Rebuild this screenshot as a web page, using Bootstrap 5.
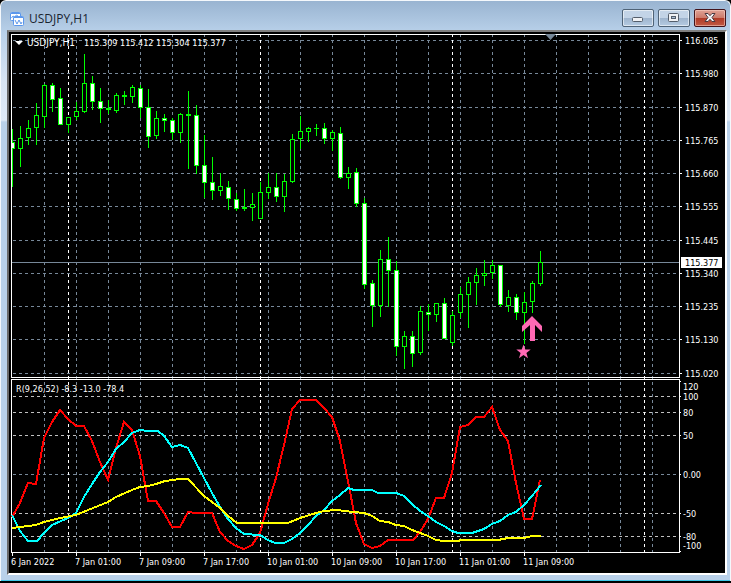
<!DOCTYPE html>
<html lang="en">
<head>
<meta charset="utf-8">
<meta name="viewport" content="width=device-width, initial-scale=1">
<title>USDJPY,H1</title>
<link href="https://cdn.jsdelivr.net/npm/bootstrap@5.3.0/dist/css/bootstrap.min.css" rel="stylesheet">
<style>
body { background: #000; }
.win {
  background: linear-gradient(#99b4d1, #b9d1ea 32px, #d7e4f3 80px, #dfeaf7 119px, #b9d1ea 121px);
  border: solid #f4f8fc;
  border-width: 1px 1px 0 1px;
  border-radius: 6px 6px 0 0;
  padding: 0 3px 6px 6px;
  box-shadow: inset 0 -1px #3fc8e8;
  margin-bottom: 1px;
}
.titlebar { height: 29px; padding: 0 1px 0 3px; }
.titlebar h1 { font: 12px/16px "Open Sans", "Noto Sans", sans-serif; color: #1a2430; padding-top: 6px; }
.app-icon { width: 14px; height: 14px; margin: 6px 5px 0 0; }
.ctl {
  width: 32px; height: 18px; border: 1px solid #4f6377; border-radius: 2px;
  background: linear-gradient(#c3d4e7 0 48%, #9fb5ce 52%, #b5cbe2);
  box-shadow: inset 0 0 0 1px rgba(255,255,255,.55);
}
.ctl-close {
  border-color: #43141b;
  background: linear-gradient(#dc9a8d 0 10%, #cc7a6b 48%, #b03a27 52%, #c25a44);
  box-shadow: inset 0 0 0 1px rgba(255,220,210,.5);
}
.chartbox { background: #000; border: 2px solid #696969; border-color: #808080 #fff #fff #696969; }
.chartbox svg { width: 100%; height: auto; }
.chart text { font: 9px "DejaVu Sans Condensed", "DejaVu Sans", sans-serif; font-stretch: condensed; fill: #fff; white-space: pre; }
.chart .symbol { font-size: 10px; }
.chart .now-label { fill: #000; }
.crisp { shape-rendering: crispEdges; }
</style>
<script src="https://cdn.jsdelivr.net/npm/bootstrap@5.3.0/dist/js/bootstrap.bundle.min.js"></script>
</head>
<body>
<main class="win d-flex flex-column">
  <header class="titlebar d-flex align-items-center">
    <svg class="app-icon flex-shrink-0" viewBox="0 0 14 14" aria-hidden="true">
      <rect x=".5" y=".5" width="10" height="8" rx="1" fill="#fff" stroke="#5b97ec"/>
      <path d="M1 1.500h9" stroke="#5b97ec"/>
      <path d="M1.500 6l1.500-2 1.500 1L6.500 3 9 5" stroke="#5b97ec" fill="none"/>
      <rect x="3.500" y="4.500" width="10" height="9" rx="1" fill="#fff" stroke="#5b97ec"/>
      <path d="M4 5.500h9" stroke="#5b97ec"/>
      <path d="M5 8l2 4 2-4 2 4 1-2" stroke="#5b97ec" fill="none"/>
    </svg>
    <h1 class="mb-0 flex-grow-1">USDJPY,H1</h1>
    <div class="d-flex gap-1 pt-1 controls">
      <button class="ctl p-0 d-flex align-items-center justify-content-center" type="button" aria-label="Minimize">
        <svg width="12" height="10" viewBox="0 0 12 10"><rect x=".5" y="4.500" width="10" height="4" rx="1" fill="#f0f2f5" stroke="#545e6b"/></svg>
      </button>
      <button class="ctl p-0 d-flex align-items-center justify-content-center" type="button" aria-label="Maximize">
        <svg width="12" height="10" viewBox="0 0 12 10"><rect x=".5" y=".5" width="10" height="8" rx="1" fill="#f0f2f5" stroke="#545e6b"/><rect x="3.500" y="3.500" width="4" height="2" fill="#a9bed5" stroke="#545e6b"/></svg>
      </button>
      <button class="ctl ctl-close p-0 d-flex align-items-center justify-content-center" type="button" aria-label="Close">
        <svg width="12" height="10" viewBox="0 0 12 10"><path d="M1 .5h3l2 2.200L8 .5h3L8 4.500l3 4H8L6 6.300 4 8.500H1l3-4z" fill="#f0f2f5" stroke="#4c3a42"/></svg>
      </button>
    </div>
  </header>
  <section class="chartbox">
    <svg class="chart d-block" viewBox="9 32 716 541" role="img" aria-label="USDJPY hourly chart">
      <g id="grid" class="crisp" fill="none"></g>
      <g class="crisp" fill="none" stroke="#fff">
        <path d="M11.500 34.500H679.500V377.500H11.500z"/>
        <path d="M11.500 379.500H679.500V552.500H11.500z"/>
        <path id="ticks"/>
      </g>
      <path d="M545 34h11l-5.500 6z" fill="#778899"/>
      <g id="candles" class="crisp" stroke="#0f0"></g>
      <g class="crisp" fill="none" stroke-width="2">
        <polyline id="fast" stroke="#f00"/>
        <polyline id="mid" stroke="#0ff"/>
        <polyline id="slow" stroke="#ff0"/>
      </g>
      <path d="M532 316l10 10v6l-7-7V341h-5V325l-8 7v-6z" fill="#ff69b4"/>
      <path d="M523.500 344.500l1.800 5h5.400l-4.300 3.400 1.600 5.400-4.500-3.200-4.500 3.200 1.600-5.400-4.300-3.400h5.400z" fill="#ff69b4"/>
      <path d="M15 41h8l-4 4z" fill="#fff"/>
      <text class="symbol" x="27" y="46">USDJPY,H1</text>
      <text x="84" y="46">115.309 115.412 115.304 115.377</text>
      <text x="16" y="392">R(9,26,52) -8.3 -13.0 -78.4</text>
      <g id="labels"></g>
      <rect class="crisp" x="681" y="257" width="41" height="11" fill="#fff"/>
      <text class="now-label" x="685" y="266">115.377</text>
    </svg>
  </section>
</main>
<script>
const el = id => document.getElementById(id);
const prices = [[40,'116.085'],[73,'115.980'],[107,'115.870'],[140,'115.765'],[173,'115.660'],[206,'115.555'],
  [240,'115.445'],[273,'115.340'],[306,'115.235'],[339,'115.130'],[373,'115.020']];
const levels = [[390,'120'],[400,'100'],[416,'80'],[439,'50'],[478,'0.00'],[517,'-50'],[540,'-80'],[549,'-100']];
const dates = ['6 Jan 2022','7 Jan 01:00','7 Jan 09:00','7 Jan 17:00','10 Jan 01:00','10 Jan 09:00','10 Jan 17:00','11 Jan 01:00','11 Jan 09:00'];

// Grid: hour lines, price lines, oscillator levels, day separators
const h = (y, c) => `<path d="M13 ${y + .5}H679" stroke="${c}" stroke-dasharray="3 3"/>`;
const v = (x, c) => `<path d="M${x + .5} 34V552" stroke="${c}" stroke-dasharray="3 3"/>`;
let grid = '';
for (let x = 44; x < 679; x += 32) grid += v(x, '#778899');
prices.forEach(([y]) => grid += h(y, '#778899'));
grid += h(474, '#778899');
[396, 412, 435, 513, 536].forEach(y => grid += h(y, '#c0c0c0'));
[68, 260, 452, 644].forEach(x => grid += v(x, '#fff'));
grid += '<path d="M12 262.500H679" stroke="#778899"/>';
el('grid').innerHTML = grid;

// Axis ticks and labels
let ticks = '', labels = '';
prices.forEach(([y, t]) => { ticks += `M680 ${y + .5}h2`; labels += `<text x="685" y="${y + 4}">${t}</text>`; });
[381, 396, 412, 435, 474, 513, 536, 551].forEach(y => ticks += `M680 ${y + .5}h1`);
levels.forEach(([y, t]) => labels += `<text x="683" y="${y}">${t}</text>`);
dates.forEach((t, i) => { const x = 12 + i * 64; ticks += `M${x + .5} 553v3`; labels += `<text x="${x - 1}" y="565">${t}</text>`; });
el('ticks').setAttribute('d', ticks);
el('labels').innerHTML = labels;

// Candles, 8 units apart: [high, body top, body bottom, low, falling]
const candles = [[129,142,149,187,1],[126,138,149,167],[120,128,138,145],[103,115,128,145],[84,85,117,128],[83,85,100,112,1],
[88,98,125,125,1],[117,117,125,133],[102,111,117,120],[54,83,112,113],[76,83,102,110,1],[88,101,109,123,1],[100,108,110,114],
[93,95,111,113],[91,95,97,105],[85,87,97,103],[85,88,108,118,1],[89,107,137,148,1],[111,118,136,139],[114,118,121,132,1],
[118,120,133,140,1],[113,114,133,143],[91,114,116,169],[105,115,166,174,1],[135,165,183,198,1],[157,182,191,200,1],
[173,186,191,196],[181,187,199,210,1],[193,199,209,211,1],[189,207,209,211],[193,204,208,221],[182,192,219,219],
[173,187,193,199],[173,187,197,202,1],[174,181,197,212],[134,139,182,183],[116,131,139,149],[127,128,132,142],
[124,128,129,136],[123,128,139,144,1],[130,132,139,151],[127,133,178,179,1],[167,173,178,189],[168,172,204,207,1],
[198,203,285,289,1],[280,283,306,327,1],[250,259,306,317],[237,259,271,307,1],[261,270,347,356,1],[331,336,347,369],
[331,336,354,367,1],[306,311,353,355],[304,312,315,331,1],[303,303,315,322],[298,303,339,339,1],[311,315,343,346],
[287,294,313,318],[277,282,295,328],[268,275,283,305],[260,273,276,286],[260,265,273,279],[265,265,305,307,1],
[290,297,306,312],[294,297,313,320,1],[292,302,313,344],[281,283,302,313],[251,262,284,286]];
el('candles').innerHTML = candles.map(([hi, t, b, lo, down], i) => {
  const x = 12 + i * 8, left = Math.max(x - 2, 12);
  const wick = `<path d="M${x + .5} ${hi}V${lo}"/>`;
  if (b - t < 3) return wick + `<rect x="${left}" y="${t}" width="${x + 3 - left}" height="${b - t}" fill="#0f0" stroke="none"/>`;
  if (i === 0) return wick + `<rect x="12" y="${t}" width="3" height="${b - t}" fill="#0f0" stroke="none"/><rect x="12" y="${t + 1}" width="2" height="${b - t - 2}" fill="#fff" stroke="none"/>`;
  return wick + `<rect x="${x - 1.5}" y="${t + .5}" width="4" height="${b - t - 1}" fill="${down ? '#fff' : '#000'}"/>`;
}).join('');

// Oscillator curves
el('fast').setAttribute('points', '12,517 20,503 28,483 36,484 44,438 52,422 60,410 68,419 76,426 84,426 92,441 100,462 108,480 116,448 124,422 132,430 140,456 148,501 156,501 164,513 172,527 180,527 188,512 196,513 212,513 220,532 228,541 236,546 244,549 252,545 260,533 268,504 276,478 284,445 292,409 300,400 316,400 324,408 332,417 340,441 348,481 356,523 364,544 372,548 380,546 388,540 413,540 420,532 428,519 436,498 444,498 452,473 460,427 468,425 476,417 484,417 492,407 500,430 508,441 516,483 524,519 532,519 540,480');
el('mid').setAttribute('points', '12,515 20,531 28,541 37,541 44,533 52,525 68,518 76,513 84,497 92,484 100,472 108,462 116,449 124,442 132,433 140,430 148,431 158,431 164,436 172,447 180,445 188,448 196,463 204,478 212,493 220,507 228,519 236,528 244,534 260,535 268,540 275,543 284,543 292,539 300,533 308,525 316,516 324,510 332,501 340,495 348,488 354,490 372,490 378,493 396,493 404,496 412,504 420,511 428,516 436,522 444,526 452,531 458,533 472,533 484,529 492,524 500,521 508,515 516,512 524,505 532,496 541,485');
el('slow').setAttribute('points', '12,528 20,527 36,525 44,522 60,518 76,515 88,510 108,502 116,497 132,490 140,487 148,486 156,484 165,481 180,479 188,479 204,496 220,508 228,516 237,523 288,523 300,518 316,513 324,511 337,510 353,512 364,513 372,516 380,521 388,522 396,525 404,526 412,530 428,536 436,540 444,541 457,541 462,540 498,540 508,538 524,538 532,536 541,536');
</script>
</body>
</html>
